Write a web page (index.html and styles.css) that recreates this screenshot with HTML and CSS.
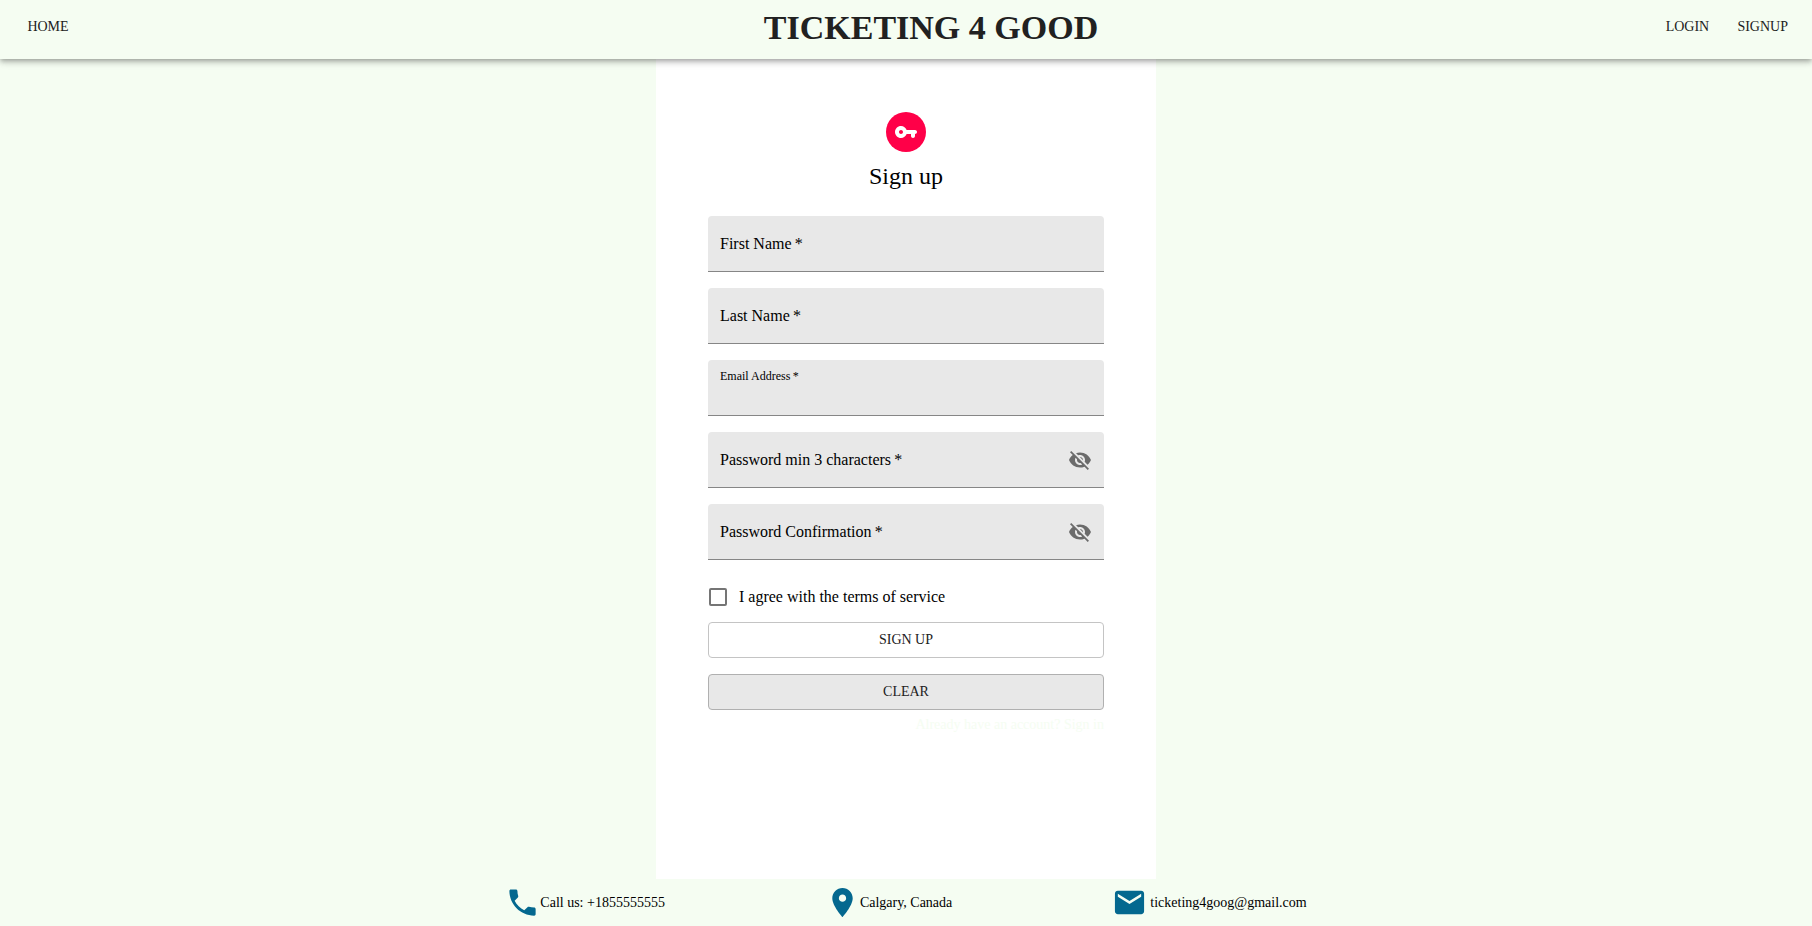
FILE: index.html
```html
<!DOCTYPE html>
<html lang="en">
<head>
<meta charset="utf-8">
<title>Ticketing 4 Good</title>
<link rel="stylesheet" href="styles.css">
</head>
<body>
<header class="topbar">
  <nav class="nav"><a class="nav-link" href="#">HOME</a></nav>
  <h1 class="brand">TICKETING 4 GOOD</h1>
  <nav class="nav nav-end">
    <a class="nav-link" href="#">LOGIN</a>
    <a class="nav-link" href="#">SIGNUP</a>
  </nav>
</header>
<main class="panel">
  <div class="avatar">
    <svg class="icon" viewBox="0 0 24 24" aria-hidden="true"><path d="M12.65 10C11.83 7.67 9.61 6 7 6c-3.31 0-6 2.69-6 6s2.69 6 6 6c2.61 0 4.83-1.67 5.65-4H17v2c0 1.1.9 2 2 2s2-.9 2-2v-2c1.1 0 2-.9 2-2s-.9-2-2-2h-8.350zM7 14c-1.1 0-2-.9-2-2s.9-2 2-2 2 .9 2 2-.9 2-2 2z"/></svg>
  </div>
  <h2 class="title">Sign up</h2>
  <form class="form">
    <div class="field">
      <label class="field-label" for="first">First Name&thinsp;*</label>
      <input class="field-input" id="first" type="text">
    </div>
    <div class="field">
      <label class="field-label" for="last">Last Name&thinsp;*</label>
      <input class="field-input" id="last" type="text">
    </div>
    <div class="field">
      <label class="field-label field-label-raised" for="email">Email Address&thinsp;*</label>
      <input class="field-input" id="email" type="email">
    </div>
    <div class="field">
      <label class="field-label" for="password">Password min 3 characters&thinsp;*</label>
      <input class="field-input" id="password" type="password">
      <button class="reveal" type="button" aria-label="Show password"><svg class="icon" viewBox="0 0 24 24" aria-hidden="true"><path d="M12 7c2.760 0 5 2.240 5 5 0 .65-.13 1.260-.36 1.830l2.920 2.920c1.510-1.260 2.700-2.890 3.430-4.750-1.730-4.390-6-7.500-11-7.500-1.400 0-2.740.25-3.980.7l2.160 2.160C10.740 7.130 11.350 7 12 7zM2 4.270l2.280 2.280.46.46C3.080 8.300 1.780 10.020 1 12c1.730 4.390 6 7.500 11 7.500 1.550 0 3.030-.3 4.380-.84l.42.42L19.730 22 21 20.730 3.270 3 2 4.270zM7.530 9.800l1.550 1.550c-.05.21-.08.43-.08.65 0 1.660 1.340 3 3 3 .22 0 .44-.03.65-.08l1.550 1.550c-.67.33-1.410.53-2.200.53-2.760 0-5-2.240-5-5 0-.79.2-1.530.53-2.200zm4.310-.78l3.150 3.150.02-.16c0-1.660-1.340-3-3-3l-.17.010z"/></svg></button>
    </div>
    <div class="field">
      <label class="field-label" for="confirm">Password Confirmation&thinsp;*</label>
      <input class="field-input" id="confirm" type="password">
      <button class="reveal" type="button" aria-label="Show password confirmation"><svg class="icon" viewBox="0 0 24 24" aria-hidden="true"><path d="M12 7c2.760 0 5 2.240 5 5 0 .65-.13 1.260-.36 1.830l2.920 2.920c1.510-1.260 2.700-2.890 3.430-4.750-1.730-4.390-6-7.500-11-7.500-1.400 0-2.740.25-3.980.7l2.160 2.160C10.740 7.130 11.350 7 12 7zM2 4.270l2.280 2.280.46.46C3.080 8.300 1.780 10.020 1 12c1.730 4.390 6 7.500 11 7.500 1.550 0 3.030-.3 4.380-.84l.42.42L19.730 22 21 20.730 3.270 3 2 4.270zM7.530 9.800l1.550 1.550c-.05.21-.08.43-.08.65 0 1.660 1.340 3 3 3 .22 0 .44-.03.65-.08l1.550 1.550c-.67.33-1.410.53-2.200.53-2.760 0-5-2.240-5-5 0-.79.2-1.530.53-2.200zm4.310-.78l3.150 3.150.02-.16c0-1.660-1.340-3-3-3l-.17.010z"/></svg></button>
    </div>
    <label class="terms" for="terms"><input class="terms-box" id="terms" type="checkbox">I agree with the terms of service</label>
    <div class="actions">
      <button class="button" type="submit">SIGN UP</button>
      <button class="button button-muted" type="reset">CLEAR</button>
    </div>
    <a class="signin" href="#">Already have an account? Sign in</a>
  </form>
</main>
<footer class="footer">
  <div class="contact">
    <svg class="contact-icon" viewBox="0 0 24 24" aria-hidden="true"><path d="M6.620 10.790c1.440 2.830 3.760 5.140 6.590 6.590l2.200-2.200c.27-.27.67-.36 1.020-.24 1.120.37 2.330.57 3.570.57.55 0 1 .45 1 1V20c0 .55-.45 1-1 1-9.390 0-17-7.610-17-17 0-.55.45-1 1-1h3.500c.55 0 1 .45 1 1 0 1.250.2 2.450.57 3.570.11.35.03.74-.25 1.020l-2.200 2.200z"/></svg>
    <span>Call us: +1855555555</span>
  </div>
  <div class="contact">
    <svg class="contact-icon" viewBox="0 0 24 24" aria-hidden="true"><path d="M12 2C8.130 2 5 5.130 5 9c0 5.250 7 13 7 13s7-7.750 7-13c0-3.870-3.130-7-7-7zm0 9.500c-1.380 0-2.500-1.120-2.500-2.500s1.120-2.500 2.500-2.500 2.500 1.120 2.500 2.500-1.120 2.500-2.500 2.500z"/></svg>
    <span>Calgary, Canada</span>
  </div>
  <div class="contact contact-spaced">
    <svg class="contact-icon" viewBox="0 0 24 24" aria-hidden="true"><path d="M20 4H4c-1.100 0-1.990.9-1.990 2L2 18c0 1.100.9 2 2 2h16c1.100 0 2-.9 2-2V6c0-1.100-.9-2-2-2zm0 4l-8 5-8-5V6l8 5 8-5v2z"/></svg>
    <span>ticketing4goog@gmail.com</span>
  </div>
</footer>
</body>
</html>
```
FILE: styles.css
```css
* {
  box-sizing: border-box;
}

body {
  margin: 0;
  min-height: 100vh;
  display: flex;
  flex-direction: column;
  background: #f5fdf2;
  color: #000;
  font-family: "Liberation Serif", "Times New Roman", serif;
  font-size: 16px;
}

.topbar {
  z-index: 1;
  display: grid;
  grid-template-columns: 1fr auto 1fr;
  align-items: start;
  padding: 7px 16px 10px;
  background: #f5fdf2;
  color: #212121;
  box-shadow: 0 2px 4px -1px rgba(0, 0, 0, 0.2), 0 4px 5px 0 rgba(0, 0, 0, 0.14), 0 1px 10px 0 rgba(0, 0, 0, 0.12);
}

.nav {
  display: flex;
  gap: 10px;
}

.nav-end {
  justify-content: flex-end;
}

.nav-link {
  min-width: 64px;
  padding: 6px 8px;
  color: inherit;
  font-size: 14px;
  line-height: 28px;
  text-align: center;
  text-decoration: none;
}

.brand {
  margin: 0;
  padding-left: 50px;
  font-size: 34px;
  line-height: 42px;
}

.panel {
  flex: 1;
  width: 100%;
  max-width: 500px;
  margin: 0 auto;
  padding: 53px 52px 48px;
  display: flex;
  flex-direction: column;
  align-items: center;
  background: #fff;
}

.avatar {
  width: 40px;
  height: 40px;
  display: flex;
  align-items: center;
  justify-content: center;
  border-radius: 50%;
  background: #ff0048;
  color: #fff;
}

.icon {
  width: 24px;
  height: 24px;
  display: block;
  fill: currentColor;
}

.title {
  margin: 8px 0 24px;
  font-size: 24px;
  font-weight: 400;
  line-height: 32px;
}

.form {
  width: 100%;
  display: flex;
  flex-direction: column;
  gap: 16px;
}

.field {
  position: relative;
  height: 56px;
  display: flex;
  align-items: center;
  border-bottom: 1px solid #868686;
  border-radius: 4px 4px 0 0;
  background: #e8e8e8;
}

.field-label {
  position: absolute;
  top: 0;
  left: 12px;
  line-height: 56px;
  pointer-events: none;
}

.field-label-raised {
  font-size: 12px;
  line-height: 32px;
}

.field-input {
  flex: 1;
  min-width: 0;
  height: 100%;
  padding: 24px 12px 8px;
  border: 0;
  outline: 0;
  background: transparent;
  font: inherit;
}

.reveal {
  padding: 0;
  margin-right: 12px;
  border: 0;
  background: transparent;
  color: #6b6b6b;
}

.terms {
  display: flex;
  align-items: center;
  gap: 12px;
  height: 42px;
}

.terms-box {
  appearance: none;
  width: 18px;
  height: 18px;
  margin: 0 0 0 1px;
  border: 2px solid #757575;
  border-radius: 2px;
  background: #fff;
}

.actions {
  display: grid;
  gap: 16px;
  margin-top: -12px;
}

.button {
  height: 36px;
  padding: 0 16px;
  border: 1px solid #c4c4c4;
  border-radius: 4px;
  background: #fff;
  color: #212121;
  font: inherit;
  font-size: 14px;
}

.button-muted {
  border-color: #b0b0b0;
  background: #e8e8e8;
}

.signin {
  align-self: flex-end;
  margin-top: -12px;
  color: #f5fdf2;
  font-size: 14px;
  line-height: 22px;
  text-decoration: none;
}

.footer {
  display: flex;
  flex-wrap: wrap;
  justify-content: center;
  gap: 8px 160px;
  padding: 6px 16px;
  font-size: 14px;
}

.contact {
  display: flex;
  align-items: center;
}

.contact-spaced {
  gap: 3px;
}

.contact-icon {
  width: 35px;
  height: 35px;
  fill: #04688f;
}
```
